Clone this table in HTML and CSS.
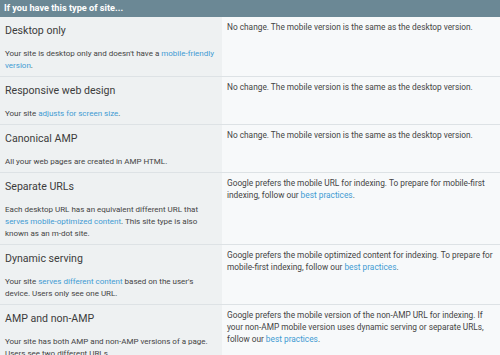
FILE: index.html
```html
<!DOCTYPE html>
<html>
<head>
<meta charset="utf-8">
<link rel="stylesheet" href="styles.css">
</head>
<body>
<div class="table">
  <div class="head">If you have this type of site...</div>
  <div class="row">
    <div class="type">
      <div class="title">Desktop only</div>
      <div class="desc">Your site is desktop only and doesn't have a <a href="#">mobile-friendly version</a>.</div>
    </div>
    <div class="effect">No change. The mobile version is the same as the desktop version.</div>
  </div>
  <div class="row">
    <div class="type">
      <div class="title">Responsive web design</div>
      <div class="desc">Your site <a href="#">adjusts for screen size</a>.</div>
    </div>
    <div class="effect">No change. The mobile version is the same as the desktop version.</div>
  </div>
  <div class="row">
    <div class="type">
      <div class="title">Canonical AMP</div>
      <div class="desc">All your web pages are created in AMP HTML.</div>
    </div>
    <div class="effect">No change. The mobile version is the same as the desktop version.</div>
  </div>
  <div class="row">
    <div class="type">
      <div class="title">Separate URLs</div>
      <div class="desc">Each desktop URL has an equivalent different URL that <a href="#">serves mobile-optimized content</a>. This site type is also known as an m-dot site.</div>
    </div>
    <div class="effect">Google prefers the mobile URL for indexing. To prepare for mobile-first indexing, follow our <a href="#">best practices</a>.</div>
  </div>
  <div class="row">
    <div class="type">
      <div class="title">Dynamic serving</div>
      <div class="desc">Your site <a href="#">serves different content</a> based on the user's device. Users only see one URL.</div>
    </div>
    <div class="effect">Google prefers the mobile optimized content for indexing. To prepare for mobile-first indexing, follow our <a href="#">best practices</a>.</div>
  </div>
  <div class="row">
    <div class="type">
      <div class="title">AMP and non-AMP</div>
      <div class="desc">Your site has both AMP and non-AMP versions of a page. Users see two different URLs.</div>
    </div>
    <div class="effect">Google prefers the mobile version of the non-AMP URL for indexing. If your non-AMP mobile version uses dynamic serving or separate URLs, follow our <a href="#">best practices</a>.</div>
  </div>
</div>
</body>
</html>
```
FILE: styles.css
```css
html, body {
  margin: 0;
  padding: 0;
  background: #f7f9fa;
  font-family: Roboto, "Liberation Sans", sans-serif;
}
.table {
  width: 500px;
}
.head {
  height: 17px;
  line-height: 16px;
  background: #6b8895;
  color: #ffffff;
  font-weight: bold;
  font-size: 9.2px;
  padding: 0 4px;
}
.row {
  display: grid;
  grid-template-columns: 222px 1fr;
  border-bottom: 1px solid #dde2e5;
}
.type {
  background: #eef1f2;
  padding: 7px 5px 4px;
}
.title {
  font-size: 10.6px;
  line-height: 14px;
  color: #3c3c3c;
  margin-bottom: 10px;
}
.desc {
  font-size: 8px;
  line-height: 12px;
  color: #444;
}
.effect {
  background: #f7f9fa;
  padding: 4px 6px 4px 5px;
  font-size: 8.3px;
  line-height: 12px;
  color: #444;
}
a {
  color: #3f9bd3;
  text-decoration: none;
}
```
